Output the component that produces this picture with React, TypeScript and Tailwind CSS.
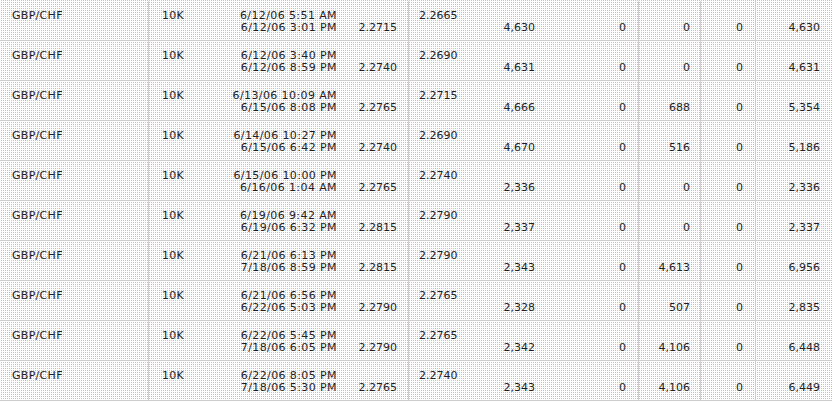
import React from "react";

type Row = {
  open: string;
  close: string;
  p1: string;
  p2: string;
  amt: string;
  a: string;
  b: string;
  c: string;
  total: string;
};

const rows: Row[] = [
  { open: "6/12/06 5:51 AM", close: "6/12/06 3:01 PM", p1: "2.2715", p2: "2.2665", amt: "4,630", a: "0", b: "0", c: "0", total: "4,630" },
  { open: "6/12/06 3:40 PM", close: "6/12/06 8:59 PM", p1: "2.2740", p2: "2.2690", amt: "4,631", a: "0", b: "0", c: "0", total: "4,631" },
  { open: "6/13/06 10:09 AM", close: "6/15/06 8:08 PM", p1: "2.2765", p2: "2.2715", amt: "4,666", a: "0", b: "688", c: "0", total: "5,354" },
  { open: "6/14/06 10:27 PM", close: "6/15/06 6:42 PM", p1: "2.2740", p2: "2.2690", amt: "4,670", a: "0", b: "516", c: "0", total: "5,186" },
  { open: "6/15/06 10:00 PM", close: "6/16/06 1:04 AM", p1: "2.2765", p2: "2.2740", amt: "2,336", a: "0", b: "0", c: "0", total: "2,336" },
  { open: "6/19/06 9:42 AM", close: "6/19/06 6:32 PM", p1: "2.2815", p2: "2.2790", amt: "2,337", a: "0", b: "0", c: "0", total: "2,337" },
  { open: "6/21/06 6:13 PM", close: "7/18/06 8:59 PM", p1: "2.2815", p2: "2.2790", amt: "2,343", a: "0", b: "4,613", c: "0", total: "6,956" },
  { open: "6/21/06 6:56 PM", close: "6/22/06 5:03 PM", p1: "2.2790", p2: "2.2765", amt: "2,328", a: "0", b: "507", c: "0", total: "2,835" },
  { open: "6/22/06 5:45 PM", close: "7/18/06 6:05 PM", p1: "2.2790", p2: "2.2765", amt: "2,342", a: "0", b: "4,106", c: "0", total: "6,448" },
  { open: "6/22/06 8:05 PM", close: "7/18/06 5:30 PM", p1: "2.2765", p2: "2.2740", amt: "2,343", a: "0", b: "4,106", c: "0", total: "6,449" },
];

function Line({ children }: { children?: React.ReactNode }) {
  return <div className="h-[12px] whitespace-nowrap">{children}</div>;
}

export default function App() {
  return (
    <div className="w-[832px] h-[402px] overflow-hidden bg-white bg-[image:conic-gradient(at_1px_1px,#c9bfc9_25%,transparent_0)] bg-[length:2px_2px] font-['DejaVu_Sans','Liberation_Sans',sans-serif] text-[11px] leading-[12px] text-[#1e1e1e] pt-[1px]">
      {rows.map((r, i) => (
        <div
          key={i}
          className="grid grid-cols-[149px_260px_230px_62px_55px_1fr] h-[40px] border-b border-[#cfcbcf]"
        >
          <div className="border-r border-[#cfcbcf] pl-[12px] pt-[9px] tracking-[0.3px]">
            <Line>GBP/CHF</Line>
          </div>
          <div className="border-r border-[#cfcbcf] pl-[13px] pr-[11px] pt-[9px] grid grid-cols-[1fr_auto_60px]">
            <div className="tracking-[0.3px]">
              <Line>10K</Line>
            </div>
            <div className="text-right tracking-[0.4px]">
              <Line>{r.open}</Line>
              <Line>{r.close}</Line>
            </div>
            <div className="text-right">
              <Line />
              <Line>{r.p1}</Line>
            </div>
          </div>
          <div className="border-r border-[#cfcbcf] pl-[10px] pr-[12px] pt-[9px] grid grid-cols-[1fr_91px]">
            <div>
              <Line>{r.p2}</Line>
              <div className="text-right">
                <Line>{r.amt}</Line>
              </div>
            </div>
            <div className="text-right">
              <Line />
              <Line>{r.a}</Line>
            </div>
          </div>
          <div className="border-r border-[#cfcbcf] pr-[10px] pt-[9px] text-right">
            <Line />
            <Line>{r.b}</Line>
          </div>
          <div className="border-r border-[#cfcbcf] pr-[12px] pt-[9px] text-right">
            <Line />
            <Line>{r.c}</Line>
          </div>
          <div className="pr-[12px] pt-[9px] text-right">
            <Line />
            <Line>{r.total}</Line>
          </div>
        </div>
      ))}
    </div>
  );
}
